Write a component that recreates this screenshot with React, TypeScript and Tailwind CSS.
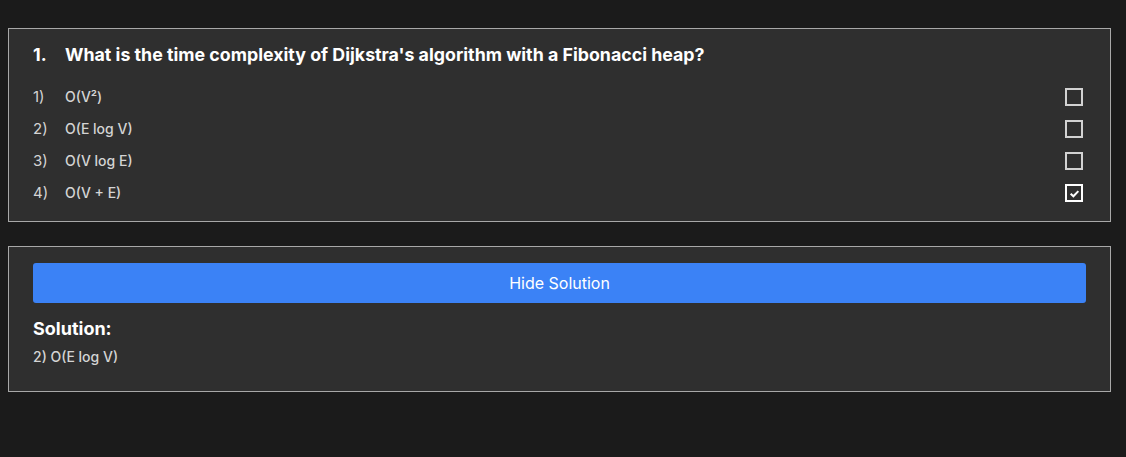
const options = ["O(V²)", "O(E log V)", "O(V log E)", "O(V + E)"];
const selected = 3;

function Checkbox({ checked }: { checked: boolean }) {
  return (
    <span
      className={
        "mr-[3px] flex h-[18px] w-[18px] items-center justify-center border-2 " +
        (checked ? "border-white" : "border-[#d2d2d2]")
      }
    >
      {checked && (
        <svg viewBox="0 0 12 12" className="h-[11px] w-[11px]">
          <path d="M1.8 6.2 L4.8 9 L10.2 3.4" fill="none" stroke="white" strokeWidth="2.2" />
        </svg>
      )}
    </span>
  );
}

export default function App() {
  return (
    <div className="min-h-[457px] bg-[#1b1b1b] pt-7 font-['Inter',sans-serif]">
      <div className="ml-2 w-[1103px] border border-[#a8a8a8] bg-[#2f2f2f] px-6 pt-3 pb-3">
        <h2 className="flex text-[17.8px] leading-7 font-bold text-white">
          <span className="w-8">1.</span>
          <span>What is the time complexity of Dijkstra's algorithm with a Fibonacci heap?</span>
        </h2>
        <ul className="mt-3">
          {options.map((o, i) => (
            <li key={o} className="flex h-8 items-center">
              <span className="w-8 text-[15px] text-[#d4d4d4]">{i + 1})</span>
              <span className="flex-1 text-sm font-medium text-[#d4d4d4]">{o}</span>
              <Checkbox checked={i === selected} />
            </li>
          ))}
        </ul>
      </div>
      <div className="mt-6 ml-2 w-[1103px] border border-[#a8a8a8] bg-[#2f2f2f] px-6 pt-4 pb-6">
        <button className="h-10 w-full rounded-[3px] bg-[#3b82f6] text-base text-white">Hide Solution</button>
        <h3 className="mt-3 text-lg leading-7 font-bold text-white">Solution:</h3>
        <p className="mt-1 text-sm leading-5 font-medium text-[#d4d4d4]">2) O(E log V)</p>
      </div>
    </div>
  );
}
